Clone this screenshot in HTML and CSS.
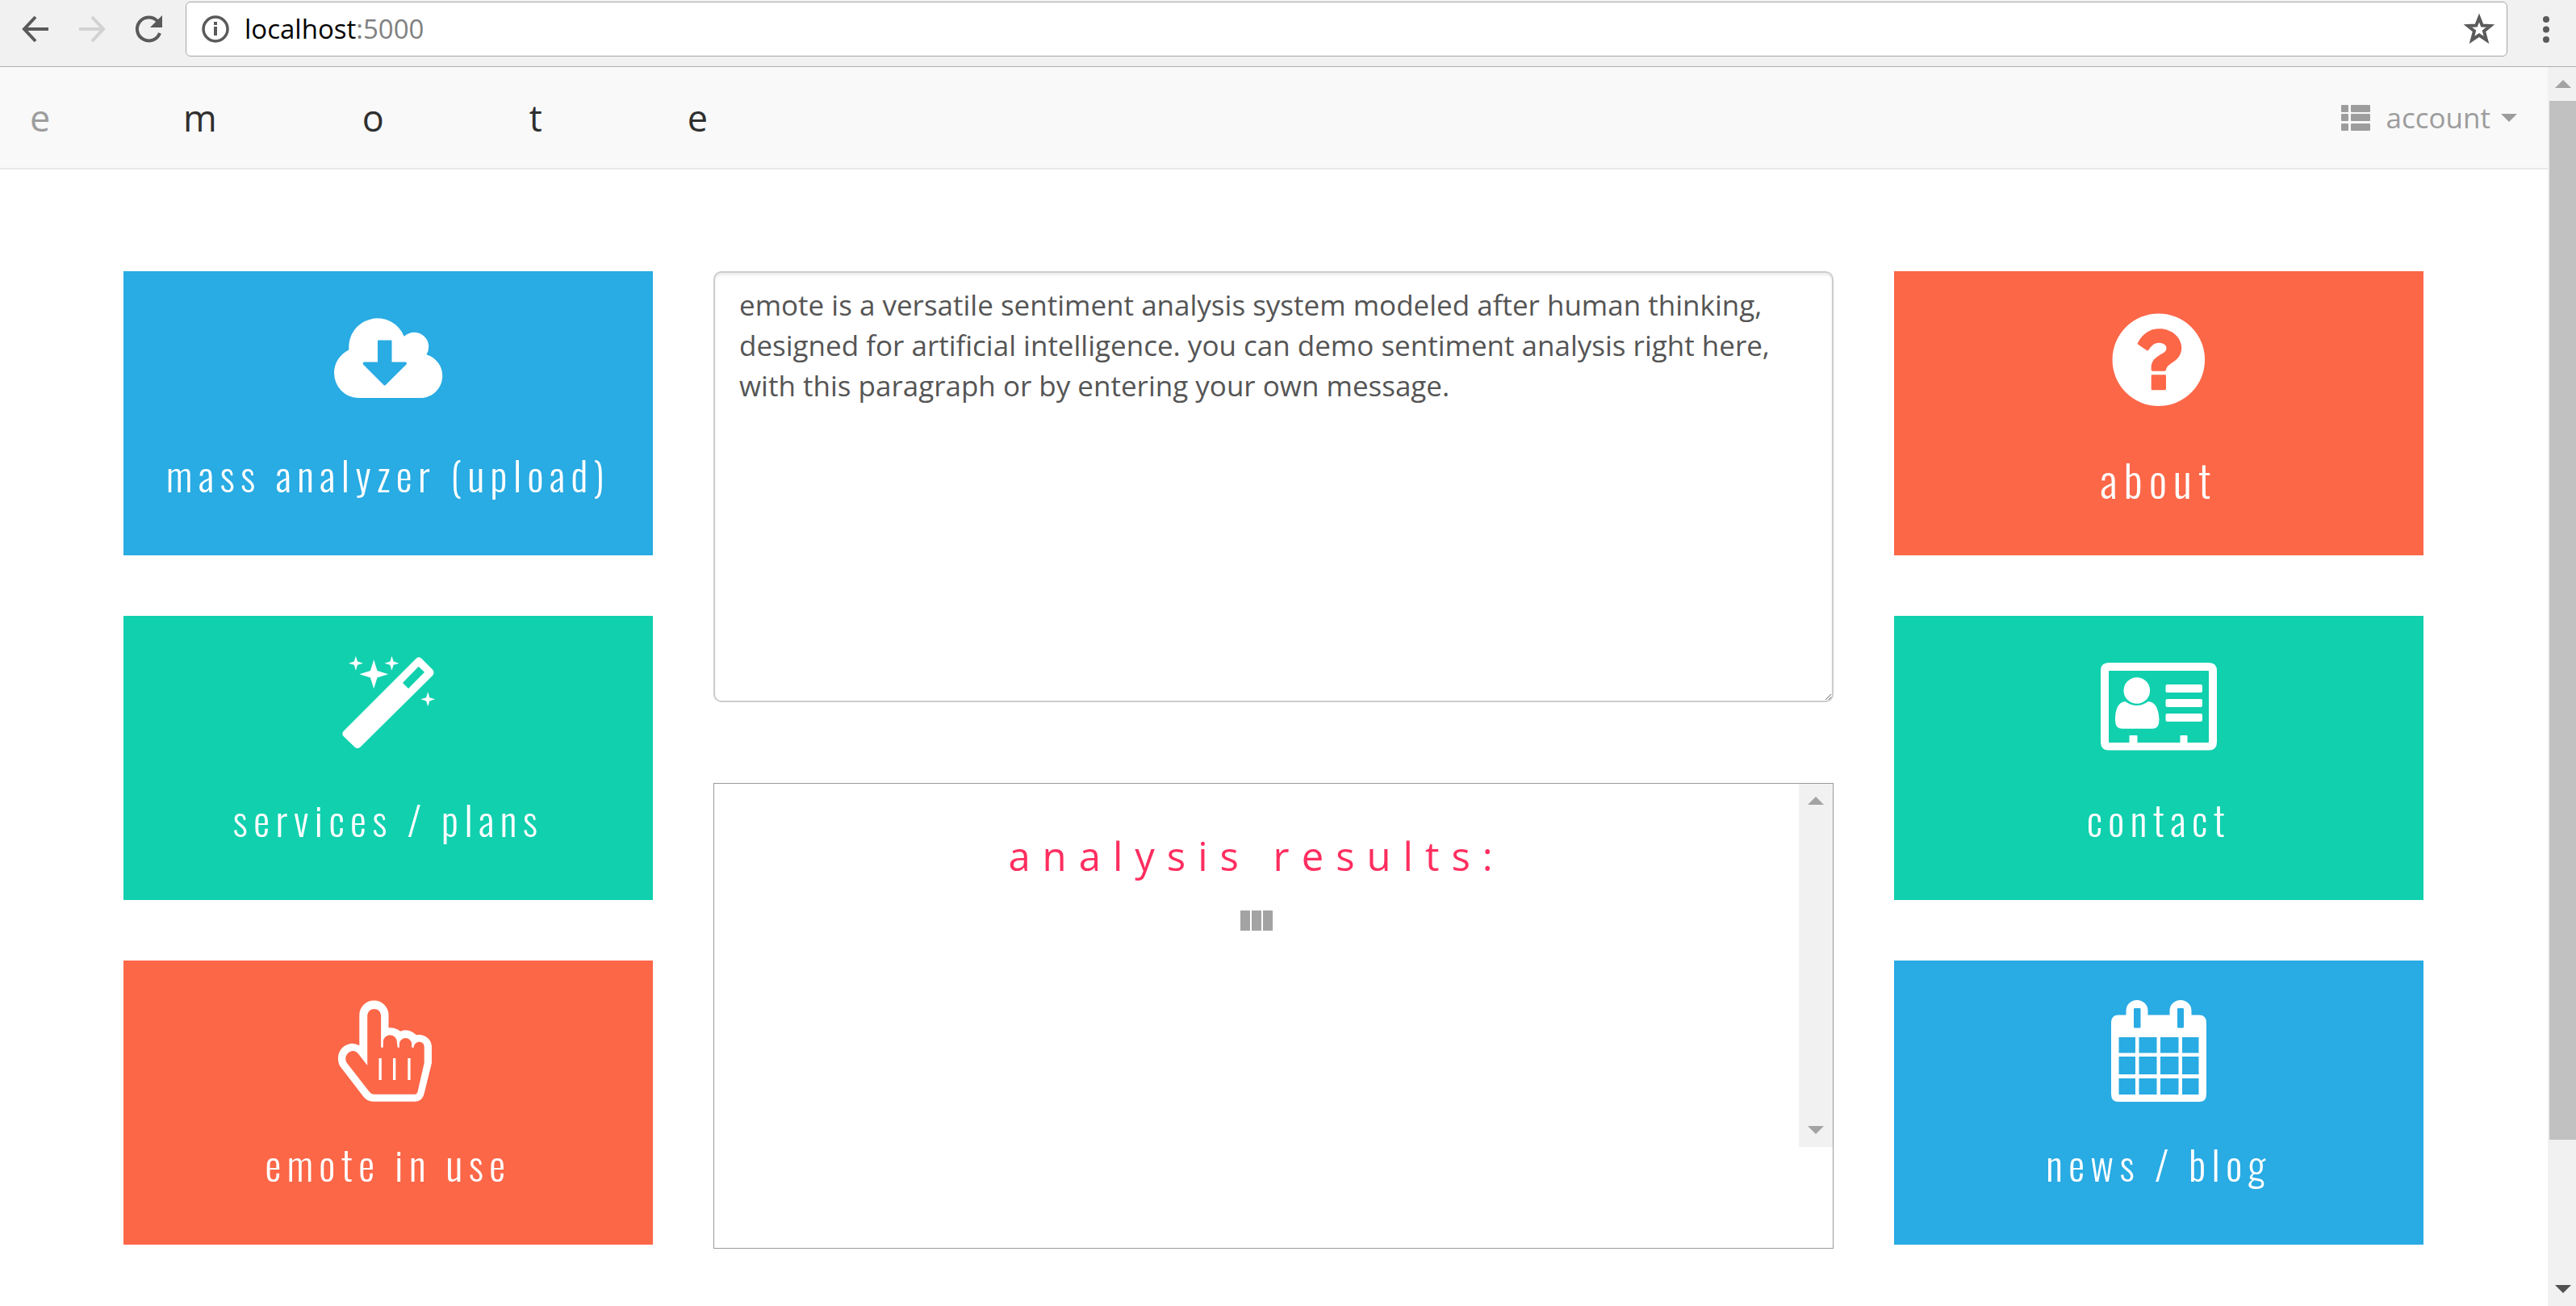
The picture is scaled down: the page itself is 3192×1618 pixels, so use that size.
FILE: index.html
```html
<!DOCTYPE html>
<html lang="en">
<head>
<meta charset="utf-8">
<title>emote</title>
<link rel="stylesheet" href="styles.css">
</head>
<body>
<header class="toolbar">
  <button class="tool" type="button" aria-label="Back">
    <svg width="36" height="36" viewBox="0 0 36 36" fill="none" stroke="#5a5a5a" stroke-width="4"><path d="M18 3L4 18L18 33M4 18H34"/></svg>
  </button>
  <button class="tool" type="button" aria-label="Forward" disabled>
    <svg width="36" height="36" viewBox="0 0 36 36" fill="none" stroke="#d2d2d2" stroke-width="4"><path d="M18 3L32 18L18 33M32 18H2"/></svg>
  </button>
  <button class="tool" type="button" aria-label="Reload">
    <svg width="36" height="36" viewBox="0 0 36 36"><path d="M32 23A14.500 14.500 0 1 1 29 8" fill="none" stroke="#5a5a5a" stroke-width="4"/><path d="M35 1V16H20Z" fill="#5a5a5a"/></svg>
  </button>
  <div class="address">
    <svg width="36" height="36" viewBox="0 0 36 36"><circle cx="18" cy="18" r="15" fill="none" stroke="#5a5a5a" stroke-width="3.500"/><path d="M16 15h4v11h-4zM16 9h4v4h-4z" fill="#5a5a5a"/></svg>
    <span class="url">localhost<span class="port">:5000</span></span>
    <button class="tool star" type="button" aria-label="Bookmark this page">
      <svg width="40" height="40" viewBox="0 0 40 40" fill="none" stroke="#5a5a5a" stroke-width="4"><path d="M20 6L23.700 15.500L34 16L26 22.500L29 33.500L20 27.500L11 33.500L14 22.500L6 16L16.300 15.500Z"/></svg>
    </button>
  </div>
  <button class="tool" type="button" aria-label="Menu">
    <svg width="36" height="36" viewBox="0 0 36 36" fill="#5a5a5a"><circle cx="18" cy="6" r="4"/><circle cx="18" cy="18.500" r="4"/><circle cx="18" cy="31" r="4"/></svg>
  </button>
</header>

<div class="viewport">
  <div class="page">
    <nav class="navbar">
      <a class="brand-first" href="#">e</a>
      <a class="brand" href="#">mote</a>
      <button class="account" type="button">
        <svg width="36" height="32" viewBox="0 0 36 32" fill="#9d9d9d"><rect width="9" height="9" rx="1"/><rect x="12" width="24" height="9" rx="1"/><rect y="11" width="9" height="9" rx="1"/><rect x="12" y="11" width="24" height="9" rx="1"/><rect y="23" width="9" height="9" rx="1"/><rect x="12" y="23" width="24" height="9" rx="1"/></svg>
        <span class="account-name">account</span>
        <svg width="20" height="10" viewBox="0 0 20 10" fill="#9d9d9d"><path d="M0 0H20L10 10Z"/></svg>
      </button>
    </nav>

    <main class="board">
      <div class="column">
        <a class="tile blue" href="#">
          <svg class="icon" viewBox="0 0 144 144"><path fill-rule="evenodd" d="M34.600 117A30 31 0 0 1 5 86C5 74 12 63 23.400 57.300A35.500 35.500 0 0 1 91.700 40.700A18 18 0 0 1 119.400 63.300A27.500 27.500 0 0 1 115 117ZM60 45.500Q59 45.500 59 46.500V72.500H42Q40 73.500 41 75.500L66.500 101Q67.600 102 68.800 101L94.500 75.500Q95.500 73.500 94 72.500H76.500V46.500Q76.500 45.500 75.500 45.500Z"/></svg>
          <span class="label">mass analyzer (upload)</span>
        </a>
        <a class="tile green" href="#">
          <svg class="icon" viewBox="0 0 144 144"><path fill-rule="evenodd" d="M107 12.500Q110 10 113 12.500L127 26.500Q130 30 127 34L37 123Q34 125 31 123L16.500 109Q14 106 16.500 103ZM109.600 22.700L117 29.700L97 50L90 43Z"/><path d="M54.200 14.300L58.500 28L72.200 32.300L58.500 36.600L54.200 50.300L49.900 36.600L36.200 32.300L49.900 28ZM31.900 9.700L34 16.600L40.900 18.700L34 20.800L31.900 27.700L29.800 20.800L22.900 18.700L29.800 16.600ZM76.500 9.700L78.600 16.600L85.500 18.700L78.600 20.800L76.500 27.700L74.400 20.800L67.500 18.700L74.400 16.600ZM121.200 54.300L123.300 61.200L130.200 63.300L123.300 65.400L121.200 72.300L119.100 65.400L112.200 63.300L119.100 61.200Z"/></svg>
          <span class="label">services / plans</span>
        </a>
        <a class="tile orange" href="#">
          <svg class="icon" viewBox="0 0 144 144"><path fill-rule="evenodd" d="M36.300 27.500A18 18 0 0 1 72.500 27.500V43.300Q81 42.500 87.200 47.700Q98 43.500 106.900 52.300C118 50.500 126 58 126 67.300V86.700L117 123.300Q115 134.700 105 134.700H53.800Q45 134.700 39.900 126.700L12.200 90.700C6 78 13 64 27 62.700Q32 62.700 36.300 65.300ZM46.200 90V27.500A8.500 8.500 0 0 1 63.100 27.500V67.700H65.800V61A8.500 8.700 0 0 1 82.800 61L83.700 67.700H85.900V63.500A7.600 7.600 0 0 1 101.100 63.500V67.700H103.800C104 59 116.700 58 116.700 67.300V86.700L108.700 121.700Q108 125.700 105 125.700H54.600Q51 125.700 48 121.700L20.700 86.700C15 77 28 66 35.400 76ZM60.500 81H63.800V108H60.500ZM78 81H81.300V108H78ZM96.300 81H99.600V108H96.300Z"/></svg>
          <span class="label">emote in use</span>
        </a>
      </div>

      <div class="column middle">
        <textarea class="message" aria-label="Message to analyze">emote is a versatile sentiment analysis system modeled after human thinking, designed for artificial intelligence. you can demo sentiment analysis right here, with this paragraph or by entering your own message.</textarea>
        <section class="results">
          <div class="results-view">
            <div class="results-body">
              <h2 class="results-title">analysis results:</h2>
              <div class="loader"><i></i><i></i><i></i></div>
            </div>
            <div class="scrollbar inner" aria-hidden="true">
              <span class="arrow"><svg width="20" height="10" viewBox="0 0 20 10" fill="#a3a3a3"><path d="M0 10H20L10 0Z"/></svg></span>
              <span class="arrow"><svg width="20" height="10" viewBox="0 0 20 10" fill="#a3a3a3"><path d="M0 0H20L10 10Z"/></svg></span>
            </div>
          </div>
        </section>
      </div>

      <div class="column">
        <a class="tile orange" href="#">
          <svg class="icon" viewBox="0 0 144 144"><path fill-rule="evenodd" d="M14.500 69.700A57.300 57.300 0 0 1 129.100 69.700A57.300 57.300 0 0 1 14.500 69.700ZM45.700 49.300C52 37 61 31.300 73 31.300C88 31.300 100.200 42 100.200 55C100.200 62 97 67 92 71C86 75 81.500 78 81 82Q81 83.700 79.500 83.700H64Q62.700 83.700 62.700 82V78C63 71 68 67 74 63.300Q81.500 60 81.500 55.500C81.500 51 77 48.700 72 48.700C66 48.700 62.500 53 59 58Q58.200 58.700 57 58L46 50.500ZM64 88.300H79.700Q81 88.300 81 89.500V106Q81 107.300 79.700 107.300H64Q62.700 107.300 62.700 106V89.500Q62.700 88.300 64 88.300Z"/></svg>
          <span class="label large">about</span>
        </a>
        <a class="tile green" href="#">
          <svg class="icon" viewBox="0 0 144 144"><path fill-rule="evenodd" d="M10 18H134Q144 18 144 28V116.500Q144 126.500 134 126.500H10Q0 126.500 0 116.500V28Q0 18 10 18ZM11 28Q10 28 10 29V116Q10 117 11 117H35.500V109Q35.500 108 36.500 108H44.500Q45.500 108 45.500 109V117H98.500V109Q98.500 108 99.500 108H106.500Q107.500 108 107.500 109V117H133Q134 117 134 116V29Q134 28 133 28Z"/><circle cx="44.800" cy="52.500" r="16.300"/><path d="M30.600 66C21 67 18 77 18 88.700Q18 99.700 26 99.700H64.500Q72.500 99.700 72.500 88.700C72 77 69 67 59 66Q52 71 44.800 71Q37 71 30.600 66Z"/><rect x="80.500" y="45" width="45.500" height="10" rx="2"/><rect x="80.500" y="63" width="45.500" height="10" rx="2"/><rect x="80.500" y="81" width="45.500" height="10" rx="2"/></svg>
          <span class="label">contact</span>
        </a>
        <a class="tile blue" href="#">
          <svg class="icon" viewBox="0 0 144 144"><path fill-rule="evenodd" d="M22 27.500H31.500V22A13.500 13 0 0 1 58.500 22V27.500H85.500V22A13.500 13 0 0 1 112.500 22V27.500H122Q131 27.500 131 37V125.500Q131 135 122 135H22Q13 135 13 125.500V37Q13 27.500 22 27.500ZM41 20V42Q41 43.500 42.500 43.500H48Q49.500 43.500 49.500 42V20Q49.500 19 48 19H42.500Q41 19 41 20ZM95 20V42Q95 43.500 96.500 43.500H101.500Q103 43.500 103 42V20Q103 19 101.500 19H96.500Q95 19 95 20ZM22.500 55H43V74.500H22.500ZM47.500 55H69.500V74.500H47.500ZM74 55H96.500V74.500H74ZM101 55H121.500V74.500H101ZM22.500 79H43V101H22.500ZM47.500 79H69.500V101H47.500ZM74 79H96.500V101H74ZM101 79H121.500V101H101ZM22.500 106H43V126H22.500ZM47.500 106H69.500V126H47.500ZM74 106H96.500V126H74ZM101 106H121.500V126H101Z"/></svg>
          <span class="label">news / blog</span>
        </a>
      </div>
    </main>
  </div>

  <div class="scrollbar outer" aria-hidden="true">
    <span class="arrow"><svg width="20" height="10" viewBox="0 0 20 10" fill="#a3a3a3"><path d="M0 10H20L10 0Z"/></svg></span>
    <span class="track"><span class="thumb"></span></span>
    <span class="arrow"><svg width="20" height="10" viewBox="0 0 20 10" fill="#505050"><path d="M0 0H20L10 10Z"/></svg></span>
  </div>
</div>
</body>
</html>
```
FILE: styles.css
```css
* {
  box-sizing: border-box;
}

body {
  margin: 0;
  min-height: 100vh;
  display: flex;
  flex-direction: column;
  background: #fff;
  font-family: "Open Sans", "Noto Sans", sans-serif;
  font-size: 35px;
  line-height: 50px;
}

svg {
  display: block;
  flex: none;
}

a {
  text-decoration: none;
}

/* Browser toolbar */
.toolbar {
  display: flex;
  align-items: center;
  gap: 34px;
  padding: 2px 19px 12px 26px;
  background: #f1f1f1;
  border-bottom: 1px solid #b0b0b0;
}

.tool {
  padding: 0;
  border: 0;
  background: none;
}

.address {
  flex: 1;
  display: flex;
  align-items: center;
  gap: 18px;
  height: 68px;
  margin-left: -6px;
  margin-right: -4px;
  padding: 0 14px 0 18px;
  background: #fff;
  border: 1px solid #a6a6a6;
  border-radius: 6px;
}

.url {
  font-size: 33px;
  color: #000;
}

.port {
  color: #808080;
}

.star {
  margin-left: auto;
}

/* Page area beside its scrollbar */
.viewport {
  flex: 1;
  display: flex;
}

.page {
  flex: 1;
  min-width: 0;
}

.navbar {
  display: flex;
  align-items: center;
  height: 127px;
  padding: 0 38px 0 37px;
  background: #f9f9f9;
  border-bottom: 2px solid #e9e9e9;
}

.brand-first,
.brand {
  font-size: 45px;
}

.brand-first {
  width: 190px;
  color: #9d9d9d;
}

.brand {
  color: #2f2f2f;
  letter-spacing: 180px;
}

.account {
  display: flex;
  align-items: center;
  margin-left: auto;
  padding: 0;
  border: 0;
  background: none;
  font: inherit;
  color: #9d9d9d;
}

.account-name {
  margin: 0 13px 0 20px;
}

.board {
  display: grid;
  grid-template-columns: 656fr 1388fr 656fr;
  gap: 75px;
  padding: 126px 154px 50px 153px;
}

.column {
  display: flex;
  flex-direction: column;
  gap: 75px;
  min-width: 0;
}

.middle {
  gap: 100px;
}

/* Tiles */
.tile {
  display: flex;
  flex-direction: column;
  align-items: center;
  height: 352px;
  padding-top: 40px;
  color: #fff;
}

.blue {
  background: #29abe3;
}

.green {
  background: #10d0ae;
}

.orange {
  background: #fc6748;
}

.icon {
  width: 144px;
  height: 144px;
  fill: #fff;
}

.label {
  margin-top: 35px;
  font-family: Oswald, "Open Sans Condensed", "Roboto Condensed", "Liberation Sans Narrow", sans-serif;
  font-weight: 300;
  font-size: 50px;
  line-height: 64px;
  letter-spacing: 0.15em;
}

.large {
  font-size: 55px;
  line-height: 76px;
}

/* Message box and results */
.message {
  display: block;
  width: 100%;
  height: 534px;
  padding: 15px 30px;
  border: 2px solid #ccc;
  border-radius: 10px;
  box-shadow: inset 0 3px 3px rgba(0, 0, 0, 0.075);
  background: #fff;
  color: #555;
  font: inherit;
  resize: vertical;
}

.results {
  padding-bottom: 125px;
  border: 1px solid #999;
}

.results-view {
  display: flex;
  height: 450px;
}

.results-body {
  flex: 1;
  padding-top: 62px;
}

.results-title {
  margin: 0;
  font-size: 49px;
  line-height: 55px;
  font-weight: 400;
  letter-spacing: 15px;
  text-align: center;
  color: #ff2e5f;
}

.loader {
  display: flex;
  justify-content: center;
  gap: 2px;
  margin-top: 40px;
}

.loader i {
  width: 12px;
  height: 25px;
  background: #a3a3a3;
}

/* Scrollbars */
.scrollbar {
  display: flex;
  flex-direction: column;
  background: #f1f1f1;
}

.inner {
  width: 42px;
  justify-content: space-between;
}

.outer {
  width: 35px;
  padding-left: 2px;
}

.arrow {
  display: flex;
  align-items: center;
  justify-content: center;
  height: 42px;
}

.track {
  flex: 1;
  display: flex;
  flex-direction: column;
}

.thumb {
  flex: 0 0 88.7%;
  background: #c1c1c1;
}
```
